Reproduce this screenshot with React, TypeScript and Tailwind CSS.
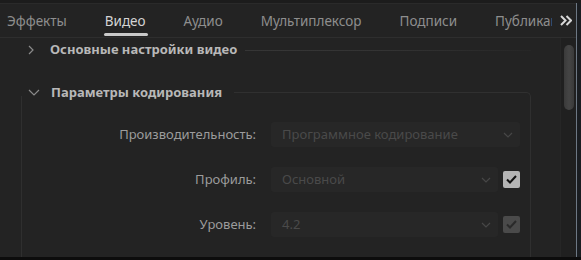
const font = { fontFamily: '"Noto Sans", "Open Sans", sans-serif' };

const tabs = ["Эффекты", "Видео", "Аудио", "Мультиплексор", "Подписи", "Публикация"];

function SelectBox({ value, width }: { value: string; width: string }) {
  return (
    <div className={`${width} h-[25px] bg-[#272727] rounded-[3px] flex items-center justify-between pl-[11px] pr-[7px]`}>
      <span className="text-[13px] text-[#4a4a4a] whitespace-nowrap">{value}</span>
      <svg width="10" height="6" viewBox="0 0 10 6" fill="none">
        <path d="M1 1l4 4 4-4" stroke="#474747" strokeWidth="1.2" />
      </svg>
    </div>
  );
}

function Check({ enabled }: { enabled: boolean }) {
  return (
    <div
      className={`w-[17px] h-[17px] rounded-[2px] flex items-center justify-center ${
        enabled ? "bg-[#b4b4b4]" : "bg-[#4a4a4a]"
      }`}
    >
      <svg width="11" height="9" viewBox="0 0 11 9" fill="none">
        <path d="M1 4.5l3 3L10 1" stroke={enabled ? "#111" : "#2a2a2a"} strokeWidth="2" />
      </svg>
    </div>
  );
}

function Row({ label, children }: { label: string; children: React.ReactNode }) {
  return (
    <div className="flex items-center h-[25px]">
      <div className="w-[234px] text-right text-[13px] text-[#9c9c9c] whitespace-nowrap">{label}</div>
      <div className="ml-[15px] flex items-center gap-[5px]">{children}</div>
    </div>
  );
}

export default function App() {
  return (
    <div className="w-[581px] h-[260px] bg-[#151515] flex flex-col overflow-hidden" style={font}>
      <div className="h-[3px] bg-[#1c1c1c]" />
      <div className="flex flex-1 min-h-0">
        <div className="w-[577px] flex flex-col bg-[#232323] border-r border-[#6d7884]">
          {/* tab bar */}
          <div className="h-[35px] flex items-center border-b border-[#2e2e2e] border-t border-t-[#2a2a2a]">
            <div className="w-[552px] overflow-hidden flex items-center gap-[38px] pl-[7px] h-full">
              {tabs.map((t, i) => (
                <div key={t} className="relative h-full flex items-center shrink-0 pt-[2px]">
                  <span className={`text-[13.5px] ${i === 1 ? "text-[#d4d4d4]" : "text-[#8e8e8e]"}`}>{t}</span>
                  {i === 1 && (
                    <div className="absolute left-[-1px] right-[-2px] bottom-[1px] h-[3px] rounded-full bg-[#c9c9c9]" />
                  )}
                </div>
              ))}
            </div>
            <div className="flex-1 flex justify-center pl-[4px]">
              <svg width="12" height="11" viewBox="0 0 12 11" fill="none">
                <path d="M1 1l4.5 4.5L1 10M6.5 1L11 5.5 6.5 10" stroke="#d8d8d8" strokeWidth="2" />
              </svg>
            </div>
          </div>
          {/* content */}
          <div className="flex flex-1 min-h-0">
            <div className="flex-1 pl-[21px] pr-[29px] pt-[2px]">
              {/* section 1 */}
              <div className="flex items-center h-[20px]">
                <div className="w-[29px] pl-[7px]">
                  <svg width="6" height="10" viewBox="0 0 6 10" fill="none">
                    <path d="M1 1l4 4-4 4" stroke="#8a8a8a" strokeWidth="1.2" />
                  </svg>
                </div>
                <span className="text-[13px] font-bold text-[#b8b8b8] whitespace-nowrap">Основные настройки видео</span>
                <div className="flex-1 ml-[8px] h-px bg-gradient-to-r from-[#363636] via-[#333] to-[#262626]" />
              </div>
              {/* section 2 */}
              <div className="mt-[22px] flex flex-col">
                <div className="flex h-[20px]">
                  <div className="w-[30px] pl-[6px] flex items-center border-l border-[#2f2f2f] [border-image:linear-gradient(to_bottom,transparent_70%,#2f2f2f_70%)_1]">
                    <svg width="12" height="7" viewBox="0 0 12 7" fill="none">
                      <path d="M1 1l5 5 5-5" stroke="#8a8a8a" strokeWidth="1.2" />
                    </svg>
                  </div>
                  <span className="text-[13px] font-bold text-[#b8b8b8] whitespace-nowrap leading-[20px]">Параметры кодирования</span>
                  <div className="flex-1 ml-[12px] mt-[10px] border-t border-r border-[#303030] rounded-tr-[5px]" />
                </div>
                <div className="border-l border-r border-[#2f2f2f] h-[160px] pt-[20px] flex flex-col gap-[20px]">
                  <Row label="Производительность:">
                    <SelectBox value="Программное кодирование" width="w-[249px]" />
                  </Row>
                  <Row label="Профиль:">
                    <SelectBox value="Основной" width="w-[227px]" />
                    <Check enabled />
                  </Row>
                  <Row label="Уровень:">
                    <SelectBox value="4.2" width="w-[227px]" />
                    <Check enabled={false} />
                  </Row>
                </div>
              </div>
            </div>
            {/* scrollbar */}
            <div className="w-[16px] bg-[#202020] border-l border-[#262626] pt-[7px] flex justify-center">
              <div className="w-[10px] h-[65px] rounded-full bg-gradient-to-r from-[#3a3a3a] via-[#454545] to-[#3a3a3a]" />
            </div>
          </div>
        </div>
        <div className="flex-1 bg-[#1a1d21]" />
      </div>
      <div className="h-[3px] bg-[#0c0c0c]" />
    </div>
  );
}
